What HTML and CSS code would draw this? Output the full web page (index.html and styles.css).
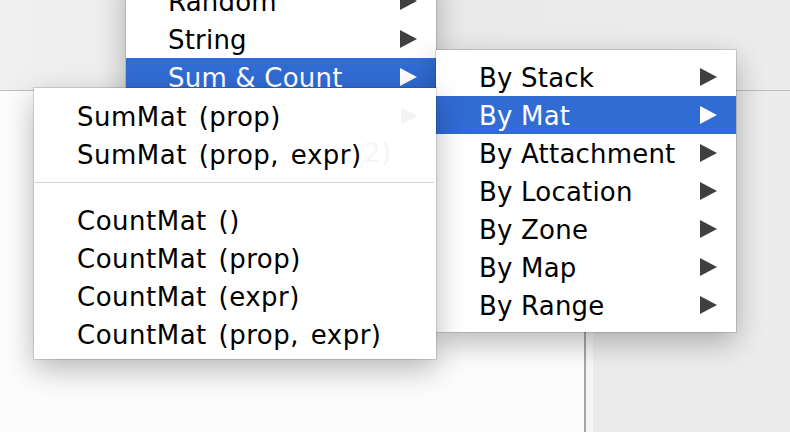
FILE: index.html
```html
<!DOCTYPE html>
<html>
<head>
<meta charset="utf-8">
<link rel="stylesheet" href="styles.css">
</head>
<body>
<div class="desktop">
  <div class="toolbar"></div>
  <div class="content">
    <div class="main"></div>
    <div class="sidebar"></div>
  </div>

  <div class="menu menu-main">
    <div class="item"><span>Random</span><span class="arrow"></span></div>
    <div class="item"><span>String</span><span class="arrow"></span></div>
    <div class="item active"><span>Sum &amp; Count</span><span class="arrow"></span></div>
    <div class="item"><span>Sum</span><span class="arrow"></span></div>
  </div>

  <div class="menu menu-by">
    <div class="item"><span>By Stack</span><span class="arrow"></span></div>
    <div class="item active"><span>By Mat</span><span class="arrow"></span></div>
    <div class="item"><span>By Attachment</span><span class="arrow"></span></div>
    <div class="item"><span>By Location</span><span class="arrow"></span></div>
    <div class="item"><span>By Zone</span><span class="arrow"></span></div>
    <div class="item"><span>By Map</span><span class="arrow"></span></div>
    <div class="item"><span>By Range</span><span class="arrow"></span></div>
  </div>

  <div class="menu menu-mat">
    <div class="ghost ghost-arrow"></div>
    <div class="ghost ghost-text">2)</div>
    <div class="item"><span>SumMat (prop)</span></div>
    <div class="item"><span>SumMat (prop, expr)</span></div>
    <div class="sep"></div>
    <div class="item"><span>CountMat ()</span></div>
    <div class="item"><span>CountMat (prop)</span></div>
    <div class="item"><span>CountMat (expr)</span></div>
    <div class="item"><span>CountMat (prop, expr)</span></div>
  </div>
</div>
</body>
</html>
```

FILE: styles.css
```css
* { box-sizing: border-box; }
html, body { margin: 0; padding: 0; }
body {
  width: 790px;
  height: 432px;
  overflow: hidden;
  font-family: "DejaVu Sans", "Noto Sans", sans-serif;
  background: #fbfbfb;
}
.desktop {
  position: relative;
  width: 790px;
  height: 432px;
  display: flex;
  flex-direction: column;
}
.toolbar {
  height: 91px;
  flex: none;
  background: linear-gradient(90deg, #f0f0f0, #e9e9e9 40%, #ececec);
  border-bottom: 1px solid #bdbdbd;
}
.content {
  flex: 1;
  display: flex;
}
.main {
  width: 584px;
  background: #fcfcfc;
}
.sidebar {
  flex: 1;
  border-left: 2px solid #a6a6a6;
  background: #ececec;
  box-shadow: inset 7px 0 0 #f6f6f6;
}

.menu {
  position: absolute;
  background: #fff;
  box-shadow: 0 0 0 1px rgba(0,0,0,0.12), 0 10px 28px rgba(0,0,0,0.28);
  color: #000;
  font-size: 26px;
  letter-spacing: 0.2px;
}
.item {
  height: 38px;
  display: flex;
  align-items: center;
  justify-content: space-between;
  white-space: nowrap;
}
.item span:first-child { position: relative; top: 1px; }
.item.active {
  background: #316bd4;
  color: #fff;
}
.arrow {
  width: 0;
  height: 0;
  border-top: 9px solid transparent;
  border-bottom: 9px solid transparent;
  border-left: 17px solid #404040;
}
.item.active .arrow { border-left-color: #fff; }

.menu-main {
  left: 126px;
  top: -26px;
  width: 310px;
  padding-top: 8px;
}
.menu-main .item { padding: 0 19px 0 42px; }

.menu-by {
  left: 436px;
  top: 50px;
  width: 300px;
  padding: 8px 0;
}
.menu-by .item { padding: 0 19px 0 43px; }

.menu-mat {
  left: 34px;
  top: 88px;
  width: 402px;
  padding: 9px 0 6px;
  letter-spacing: 0.5px;
  word-spacing: 3px;
}
.menu-mat .item { padding: 0 20px 0 43px; }
.sep {
  height: 1px;
  background: #d4d4d4;
  margin: 9px 2px 18px 0;
}
.ghost { position: absolute; }
.ghost-arrow {
  left: 367px;
  top: 19px;
  width: 0; height: 0;
  border-top: 9px solid transparent;
  border-bottom: 9px solid transparent;
  border-left: 17px solid #f4f4f4;
}
.ghost-text {
  left: 330px;
  top: 50px;
  color: #f5f5f5;
  font-size: 26px;
}
```
